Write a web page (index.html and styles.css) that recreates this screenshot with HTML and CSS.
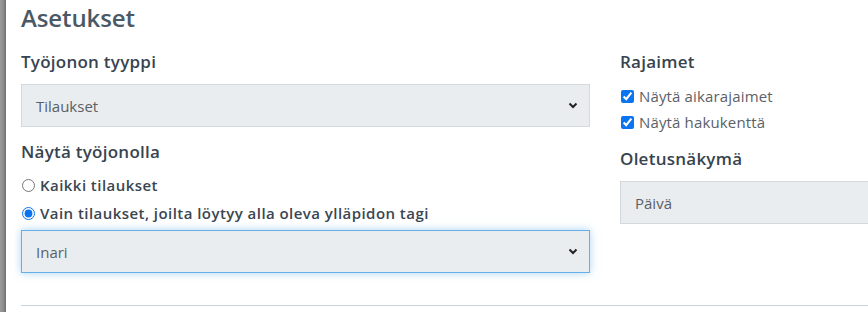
FILE: index.html
```html
<!DOCTYPE html>
<html lang="fi">
<head>
<meta charset="utf-8">
<title>Asetukset</title>
<link rel="stylesheet" href="styles.css">
</head>
<body>
<div class="page">
  <div class="rail"></div>
  <main class="content">
    <h1 class="title">Asetukset</h1>
    <div class="cols">
      <section class="col">
        <h2 class="label">Työjonon tyyppi</h2>
        <div class="select">
          <span>Tilaukset</span>
          <svg class="chev" width="10" height="7" viewBox="0 0 10 7"><path d="M1.5 1.5 L5 5 L8.5 1.5" fill="none" stroke="#222" stroke-width="2"/></svg>
        </div>
        <h2 class="label label-gap">Näytä työjonolla</h2>
        <label class="radio"><input type="radio" name="show"><span>Kaikki tilaukset</span></label>
        <label class="radio"><input type="radio" name="show" checked><span>Vain tilaukset, joilta löytyy alla oleva ylläpidon tagi</span></label>
        <div class="select select-focus">
          <span>Inari</span>
          <svg class="chev" width="10" height="7" viewBox="0 0 10 7"><path d="M1.5 1.5 L5 5 L8.5 1.5" fill="none" stroke="#222" stroke-width="2"/></svg>
        </div>
      </section>
      <section class="col">
        <h2 class="label label-check">Rajaimet</h2>
        <label class="check"><input type="checkbox" checked><span>Näytä aikarajaimet</span></label>
        <label class="check"><input type="checkbox" checked><span>Näytä hakukenttä</span></label>
        <h2 class="label label-gap2">Oletusnäkymä</h2>
        <div class="select">
          <span>Päivä</span>
          <svg class="chev" width="10" height="7" viewBox="0 0 10 7"><path d="M1.5 1.5 L5 5 L8.5 1.5" fill="none" stroke="#222" stroke-width="2"/></svg>
        </div>
      </section>
    </div>
    <hr class="divider">
  </main>
</div>
</body>
</html>
```

FILE: styles.css
```css
html, body {
  margin: 0;
  padding: 0;
  background: #fff;
  overflow: hidden;
}
body {
  font-family: "Open Sans", "Noto Sans", sans-serif;
  color: #555;
}
.page {
  display: flex;
  width: 100vw;
  min-height: 312px;
  overflow: hidden;
}
.rail {
  width: 6px;
  flex: none;
  background: linear-gradient(to right, #9c9c9c, #8a8a8a 60%, #6f6f6f);
}
.content {
  flex: 1;
  min-width: 0;
  padding: 2px 0 0 15px;
}
.title {
  margin: 0 0 15px;
  font-size: 24px;
  line-height: 32px;
  font-weight: 600;
  color: #4a5964;
  letter-spacing: -0.1px;
}
.cols {
  display: grid;
  grid-template-columns: 569px 569px;
  column-gap: 30px;
}
.col {
  display: flex;
  flex-direction: column;
  min-width: 0;
}
.label {
  margin: 0 0 10px;
  font-size: 17px;
  line-height: 25px;
  font-weight: 600;
  color: #37444f;
  letter-spacing: 0.25px;
}
.label-gap {
  margin-top: 12px;
  margin-bottom: 7px;
}
.label-check {
  margin-bottom: 9px;
}
.label-gap2 {
  margin-top: 11px;
}
.select {
  box-sizing: border-box;
  height: 43px;
  display: flex;
  align-items: center;
  justify-content: space-between;
  padding: 0 11px 0 14px;
  background: #e9edf0;
  border: 1px solid #d3d9de;
  font-size: 15px;
  color: #5a6066;
}
.select-focus {
  margin-top: 3px;
  border-color: #66afe9;
  box-shadow: 0 0 8px rgba(102, 175, 233, 0.55);
}
.chev {
  display: block;
}
.radio, .check {
  display: flex;
  align-items: center;
  font-size: 15px;
}
.radio {
  height: 28px;
  font-weight: 600;
  color: #3a4651;
  letter-spacing: 0.45px;
}
.check {
  height: 26px;
  color: #5b6168;
  letter-spacing: 0.15px;
}
.radio input, .check input {
  margin: 0 5px 0 1px;
  width: 13px;
  height: 13px;
  accent-color: #0b74f0;
}
.divider {
  margin: 32px 0 0;
  border: 0;
  border-top: 1px solid #c8d4da;
  height: 0;
}
```
